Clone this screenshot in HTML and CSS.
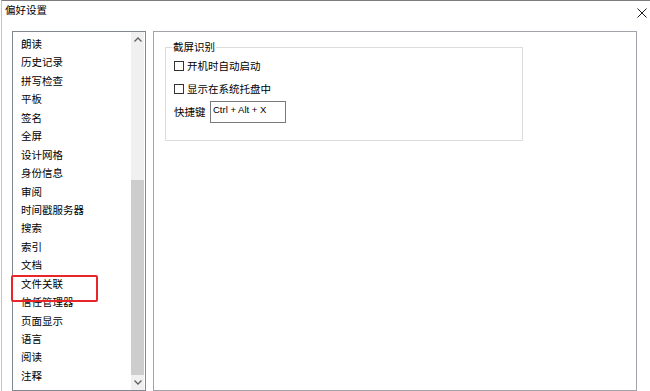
FILE: index.html
```html
<!DOCTYPE html>
<html lang="zh-CN">
<head>
    <meta charset="UTF-8" />
    <title>偏好设置</title>
    <link rel="stylesheet" href="styles.css">
</head>
<body>
<div class="window">
    <div class="titlebar">
        <span class="title">偏好设置</span>
        <svg class="close" width="10" height="10" viewBox="0 0 10 10">
            <path d="M0.5 0.5 L9.5 9.5 M9.5 0.5 L0.5 9.5" stroke="#1a1a1a" stroke-width="1" fill="none"/>
        </svg>
    </div>

    <div class="content">
        <div class="list-box">
            <ul class="cat-list">
                <li>朗读</li>
                <li>历史记录</li>
                <li>拼写检查</li>
                <li>平板</li>
                <li>签名</li>
                <li>全屏</li>
                <li>设计网格</li>
                <li>身份信息</li>
                <li>审阅</li>
                <li>时间戳服务器</li>
                <li>搜索</li>
                <li>索引</li>
                <li>文档</li>
                <li>文件关联</li>
                <li>信任管理器</li>
                <li>页面显示</li>
                <li>语言</li>
                <li>阅读</li>
                <li>注释</li>
            </ul>
            <div class="scrollbar">
                <div class="sb-btn sb-up">
                    <svg width="8" height="5" viewBox="0 0 8 5"><path d="M0.5 4.5 L4 1 L7.5 4.5" stroke="#606060" stroke-width="1.3" fill="none"/></svg>
                </div>
                <div class="sb-track"><div class="sb-thumb"></div></div>
                <div class="sb-btn sb-down">
                    <svg width="8" height="5" viewBox="0 0 8 5"><path d="M0.5 0.5 L4 4 L7.5 0.5" stroke="#606060" stroke-width="1.3" fill="none"/></svg>
                </div>
            </div>
        </div>

        <div class="panel">
            <fieldset class="group">
                <legend>截屏识别</legend>
                <div class="row">
                    <span class="check"></span>
                    <span>开机时自动启动</span>
                </div>
                <div class="row">
                    <span class="check"></span>
                    <span>显示在系统托盘中</span>
                </div>
                <div class="row hotkey-row">
                    <span class="hotkey-label">快捷键</span>
                    <div class="hotkey">Ctrl + Alt + X</div>
                </div>
            </fieldset>
        </div>
    </div>

    <!-- 标注框 -->
    <div class="mark"></div>
</div>
</body>
</html>
```

FILE: styles.css
```css
* {
    box-sizing: border-box;
}
body {
    margin: 0;
    padding: 0;
    background-color: #ffffff;
    font-family: "Noto Sans CJK SC", "Noto Sans", sans-serif;
    font-size: 10.5px;
    color: #000;
    overflow: hidden;
}
.window {
    position: relative;
    margin-left: 1px;
    height: 391px;
    border-top: 1px solid #7d7d7d;
    border-left: 1px solid #c4c4c4;
    overflow: hidden;
}
.titlebar {
    display: flex;
    justify-content: space-between;
    align-items: flex-start;
    height: 30px;
    padding: 1px 3px 0 3px;
}
.title {
    line-height: 16px;
}
.close {
    margin-top: 6px;
}
.content {
    display: flex;
    gap: 7px;
    padding-left: 10px;
}
.list-box {
    display: flex;
    width: 134px;
    height: 360px;
    border: 1px solid #828790;
}
.cat-list {
    flex: 1;
    list-style: none;
    margin: 0;
    padding: 3px 0 0 8px;
}
.cat-list li {
    height: 18.45px;
    line-height: 18.45px;
    white-space: nowrap;
}
.scrollbar {
    display: flex;
    flex-direction: column;
    width: 13px;
    margin-right: 1px;
    background-color: #f0f0f0;
}
.sb-btn {
    display: flex;
    align-items: center;
    justify-content: center;
}
.sb-up {
    height: 14px;
}
.sb-down {
    height: 15px;
}
.sb-track {
    flex: 1;
    display: flex;
    flex-direction: column;
    padding-top: 134px;
}
.sb-thumb {
    flex: 1;
    background-color: #cdcdcd;
}
.panel {
    width: 484px;
    height: 360px;
    border: 1px solid #a3a3aa;
    padding: 8px 0 0 11px;
}
.group {
    width: 358px;
    margin: 0;
    padding: 0 6px 17px 6px;
    border: 1px solid #dcdcdc;
}
.group legend {
    padding: 0 1px;
    line-height: 14px;
}
.row {
    display: flex;
    align-items: center;
    height: 23px;
    padding-left: 2px;
}
.check {
    width: 10px;
    height: 10px;
    border: 1px solid #333;
    margin-right: 3px;
    background-color: #fff;
}
.hotkey-label {
    width: 36px;
}
.hotkey {
    width: 76px;
    height: 22px;
    border: 1px solid #7a7a7a;
    padding: 1px 0 0 2px;
    font-family: "Liberation Sans", Arial, sans-serif;
    font-size: 9.5px;
    line-height: 14px;
}
.mark {
    position: absolute;
    left: 9px;
    top: 274px;
    width: 87px;
    height: 27px;
    border: 2px solid #e8262a;
    border-radius: 2px;
}
```
